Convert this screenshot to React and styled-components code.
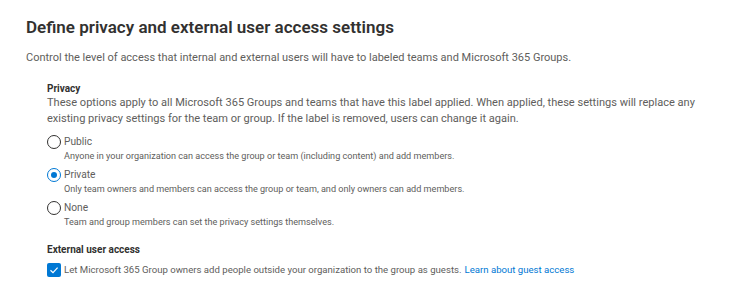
import React from 'react';
import styled, { createGlobalStyle } from 'styled-components';

const GlobalStyle = createGlobalStyle`
    body {
        margin: 0;
        background: #ffffff;
        font-family: Roboto, "Liberation Sans", sans-serif;
        color: #323130;
    }
`;

const Page = styled.div`
    padding: 14px 25px 0 26px;
    width: 750px;
    height: 300px;
    box-sizing: border-box;
    overflow: hidden;
`;

const Title = styled.h1`
    margin: 0;
    font-size: 17px;
    font-weight: 600;
    line-height: 26px;
    color: #323130;
`;

const Intro = styled.p`
    margin: 10px 0 0 0;
    font-size: 11px;
    line-height: 16px;
    color: #605e5c;
`;

const Section = styled.section`
    padding-left: 21px;
    margin-top: ${(p) => p.$top}px;
`;

const SectionTitle = styled.h2`
    margin: 0;
    font-size: 10px;
    font-weight: 700;
    line-height: 14px;
    color: #323130;
`;

const SectionText = styled.p`
    margin: -1px 0 0 0;
    font-size: 11.05px;
    line-height: 16px;
    color: #605e5c;
`;

const Options = styled.div`
    display: flex;
    flex-direction: column;
    gap: 5px;
    margin-top: 8px;
`;

const Option = styled.label`
    display: grid;
    grid-template-columns: 14px 1fr;
    column-gap: 3px;
    align-items: center;
    cursor: pointer;
`;

const Radio = styled.span`
    width: 14px;
    height: 14px;
    box-sizing: border-box;
    border-radius: 50%;
    border: 1px solid ${(p) => (p.$checked ? '#0078d4' : '#323130')};
    display: flex;
    align-items: center;
    justify-content: center;

    &::after {
        content: '';
        width: 6px;
        height: 6px;
        border-radius: 50%;
        background: ${(p) => (p.$checked ? '#0078d4' : 'transparent')};
    }
`;

const OptionLabel = styled.span`
    font-size: 10.2px;
    line-height: 14px;
    color: #605e5c;
`;

const OptionHint = styled.span`
    grid-column: 2;
    font-size: 9.1px;
    line-height: 14px;
    color: #605e5c;
`;

const CheckRow = styled.label`
    display: flex;
    align-items: center;
    gap: 3px;
    margin-top: 5px;
    font-size: 9.6px;
    line-height: 16px;
    color: #605e5c;
`;

const Box = styled.span`
    width: 14px;
    height: 14px;
    border-radius: 2px;
    background: #0078d4;
    display: flex;
    align-items: center;
    justify-content: center;
`;

const Link = styled.a`
    color: #0078d4;
    text-decoration: none;
    margin-left: 3px;
`;

const privacyOptions = [
    {
        id: 'public',
        label: 'Public',
        hint: 'Anyone in your organization can access the group or team (including content) and add members.',
    },
    {
        id: 'private',
        label: 'Private',
        hint: 'Only team owners and members can access the group or team, and only owners can add members.',
    },
    {
        id: 'none',
        label: 'None',
        hint: 'Team and group members can set the privacy settings themselves.',
    },
];

export default function App() {
    const selected = 'private';
    return (
        <>
            <GlobalStyle />
            <Page>
                <Title>Define privacy and external user access settings</Title>
                <Intro>
                    Control the level of access that internal and external users will have to labeled teams and Microsoft 365 Groups.
                </Intro>

                <Section $top={16}>
                    <SectionTitle>Privacy</SectionTitle>
                    <SectionText>
                        These options apply to all Microsoft 365 Groups and teams that have this label applied. When applied, these settings will replace any existing privacy settings for the team or group. If the label is removed, users can change it again.
                    </SectionText>
                    <Options>
                        {privacyOptions.map((o) => (
                            <Option key={o.id}>
                                <Radio $checked={o.id === selected} />
                                <OptionLabel>{o.label}</OptionLabel>
                                <OptionHint>{o.hint}</OptionHint>
                            </Option>
                        ))}
                    </Options>
                </Section>

                <Section $top={14}>
                    <SectionTitle>External user access</SectionTitle>
                    <CheckRow>
                        <Box>
                            <svg width="10" height="10" viewBox="0 0 10 10">
                                <path d="M1.5 5.2 L4 7.6 L8.6 2.6" fill="none" stroke="#fff" strokeWidth="1.2" />
                            </svg>
                        </Box>
                        <span>
                            Let Microsoft 365 Group owners add people outside your organization to the group as guests.
                            <Link href="#">Learn about guest access</Link>
                        </span>
                    </CheckRow>
                </Section>
            </Page>
        </>
    );
}
